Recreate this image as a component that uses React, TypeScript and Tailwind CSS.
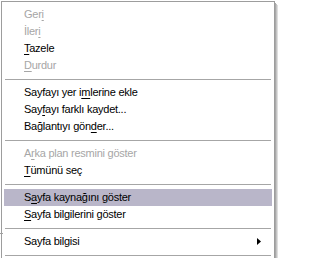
import React from "react";

type Item =
  | { kind: "item"; pre: string; u: string; post: string; disabled?: boolean; active?: boolean; sub?: boolean }
  | { kind: "sep" };

const items: Item[] = [
  { kind: "item", pre: "Ger", u: "i", post: "", disabled: true },
  { kind: "item", pre: "İler", u: "i", post: "", disabled: true },
  { kind: "item", pre: "", u: "T", post: "azele" },
  { kind: "item", pre: "", u: "D", post: "urdur", disabled: true },
  { kind: "sep" },
  { kind: "item", pre: "Sayfayı yer i", u: "m", post: "lerine ekle" },
  { kind: "item", pre: "Say", u: "f", post: "ayı farklı kaydet..." },
  { kind: "item", pre: "Bağlantıyı gön", u: "d", post: "er..." },
  { kind: "sep" },
  { kind: "item", pre: "A", u: "r", post: "ka plan resmini göster", disabled: true },
  { kind: "item", pre: "", u: "T", post: "ümünü seç" },
  { kind: "sep" },
  { kind: "item", pre: "S", u: "a", post: "yfa kaynağını göster", active: true },
  { kind: "item", pre: "", u: "S", post: "ayfa bilgilerini göster" },
  { kind: "sep" },
  { kind: "item", pre: "Sayfa bilgisi", u: "", post: "", sub: true },
  { kind: "sep" },
];

export default function App() {
  return (
    <div
      className="relative w-[278px] h-[258px] overflow-hidden bg-white"
      style={{ fontFamily: '"Liberation Sans", Arial, sans-serif' }}
    >
      <div className="absolute left-0 top-[233px] w-[3px] h-px bg-[#a0a0a0]" />
      <div className="ml-px mt-px w-[274px] h-[280px] border border-[#9d9d9d] bg-white pt-[4px] px-[2px] shadow-[1px_2px_0_#a9a9a9,2px_3px_0_#c4c4c4,3px_4px_0_#dedede]">
        {items.map((it, i) =>
          it.kind === "sep" ? (
            <div key={i} className="h-[10px] flex items-center pl-px pr-px">
              <div className="h-px w-full bg-[#a6a6a6]" />
            </div>
          ) : (
            <div
              key={i}
              className={
                "h-[17px] flex items-center pl-[20px] pr-[8px] text-[11px] leading-[17px] tracking-[-0.25px] " +
                (it.active ? "bg-[#b9b6c9] " : "") +
                (it.disabled ? "text-[#a6a6a6]" : "text-black")
              }
            >
              <span className="flex-1 whitespace-nowrap">
                {it.pre}
                {it.u && <span className="underline underline-offset-2">{it.u}</span>}
                {it.post}
              </span>
              {it.sub && (
                <svg width="4" height="7" viewBox="0 0 4 7" className="mr-[3px]">
                  <path d="M0 0 L4 3.5 L0 7 Z" fill="#000" />
                </svg>
              )}
            </div>
          )
        )}
      </div>
    </div>
  );
}
